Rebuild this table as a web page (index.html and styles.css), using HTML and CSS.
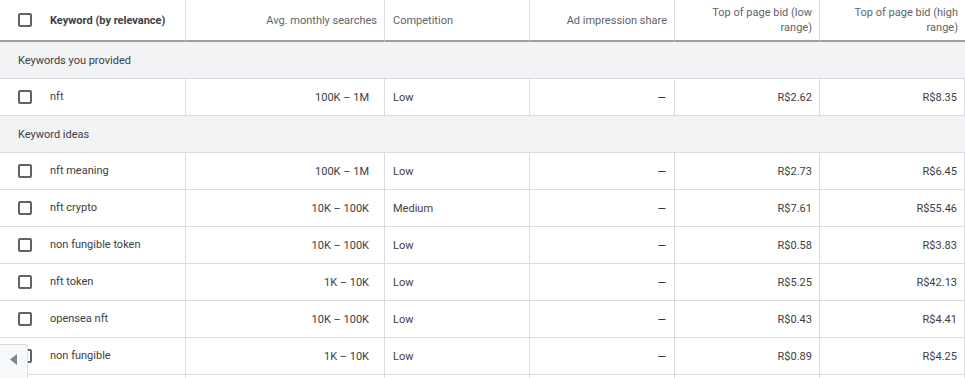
FILE: index.html
```html
<!DOCTYPE html>
<html lang="en">
<head>
    <meta charset="UTF-8">
    <meta name="viewport" content="width=device-width, initial-scale=1.0">
    <title>Keyword ideas</title>
    <link rel="stylesheet" href="styles.css">
</head>
<body>
    <div class="wrap">
        <table class="kw-table">
            <colgroup>
                <col class="c-kw">
                <col class="c-avg">
                <col class="c-comp">
                <col class="c-share">
                <col class="c-low">
                <col class="c-high">
            </colgroup>
            <thead>
                <tr>
                    <th class="kw-head"><span class="check"></span><span class="kw-title">Keyword (by relevance)</span></th>
                    <th class="num">Avg. monthly searches</th>
                    <th>Competition</th>
                    <th class="num">Ad impression share</th>
                    <th class="num">Top of page bid (low range)</th>
                    <th class="num">Top of page bid (high range)</th>
                </tr>
            </thead>
            <tbody>
                <tr class="group"><td colspan="6">Keywords you provided</td></tr>
                <tr>
                    <td class="kw"><span class="check"></span>nft</td>
                    <td class="num avg">100K – 1M</td>
                    <td>Low</td>
                    <td class="num dash">—</td>
                    <td class="num">R$2.62</td>
                    <td class="num">R$8.35</td>
                </tr>
                <tr class="group"><td colspan="6">Keyword ideas</td></tr>
                <tr>
                    <td class="kw"><span class="check"></span>nft meaning</td>
                    <td class="num avg">100K – 1M</td>
                    <td>Low</td>
                    <td class="num dash">—</td>
                    <td class="num">R$2.73</td>
                    <td class="num">R$6.45</td>
                </tr>
                <tr>
                    <td class="kw"><span class="check"></span>nft crypto</td>
                    <td class="num avg">10K – 100K</td>
                    <td>Medium</td>
                    <td class="num dash">—</td>
                    <td class="num">R$7.61</td>
                    <td class="num">R$55.46</td>
                </tr>
                <tr>
                    <td class="kw"><span class="check"></span>non fungible token</td>
                    <td class="num avg">10K – 100K</td>
                    <td>Low</td>
                    <td class="num dash">—</td>
                    <td class="num">R$0.58</td>
                    <td class="num">R$3.83</td>
                </tr>
                <tr>
                    <td class="kw"><span class="check"></span>nft token</td>
                    <td class="num avg">1K – 10K</td>
                    <td>Low</td>
                    <td class="num dash">—</td>
                    <td class="num">R$5.25</td>
                    <td class="num">R$42.13</td>
                </tr>
                <tr>
                    <td class="kw"><span class="check"></span>opensea nft</td>
                    <td class="num avg">10K – 100K</td>
                    <td>Low</td>
                    <td class="num dash">—</td>
                    <td class="num">R$0.43</td>
                    <td class="num">R$4.41</td>
                </tr>
                <tr>
                    <td class="kw"><span class="check"></span>non fungible</td>
                    <td class="num avg">1K – 10K</td>
                    <td>Low</td>
                    <td class="num dash">—</td>
                    <td class="num">R$0.89</td>
                    <td class="num">R$4.25</td>
                </tr>
                <!-- next row only peeks in below the fold -->
                <tr class="peek">
                    <td></td><td></td><td></td><td></td><td></td><td></td>
                </tr>
            </tbody>
        </table>

        <button class="scroll-left" aria-label="Scroll left">
            <svg width="7" height="11" viewBox="0 0 7 11"><path d="M7 0 L7 11 L0 5.5 Z" fill="#80868b"/></svg>
        </button>
    </div>
</body>
</html>
```

FILE: styles.css
```css
* { margin: 0; padding: 0; box-sizing: border-box; }
html, body { height: 100%; overflow: hidden; }
body { font-family: Roboto, "Liberation Sans", Arial, sans-serif; font-size: 11px; color: #3c4043; background: #fff; }
.wrap { position: relative; height: 378px; overflow: hidden; }

.kw-table { width: 965px; table-layout: fixed; border-collapse: separate; border-spacing: 0; }
.c-kw { width: 186px; }
.c-avg { width: 199px; }
.c-comp, .c-share, .c-low, .c-high { width: 145px; }

.kw-table th { height: 42px; padding: 0 7px 0 8px; font-weight: 400; color: #5f6368; text-align: left; line-height: 15px; border-right: 1px solid #dadce0; border-bottom: 2px solid #9aa0a6; vertical-align: middle; }
.kw-table th:last-child { border-right: none; }
.kw-table th.num { text-align: right; }
.kw-table th.kw-head { padding-left: 18px; }
.kw-title { font-weight: 700; color: #3c4043; }

.kw-table td { height: 37px; padding: 0 7px 0 8px; border-right: 1px solid #dadce0; border-bottom: 1px solid #dadce0; white-space: nowrap; vertical-align: middle; }
.kw-table td.num { text-align: right; }
.kw-table td.avg { padding-right: 15px; }
.kw-table td.dash { padding-right: 8px; color: #202124; }
.kw-table td.kw { padding-left: 18px; }

.group td { background: #f1f3f4; padding-left: 18px; border-right: none; }

.check { display: inline-block; width: 14px; height: 14px; border: 2px solid #5f6368; border-radius: 2px; vertical-align: middle; margin: -2px 18px 0 0; }

.scroll-left { position: absolute; left: -1px; top: 344px; width: 29px; height: 40px; background: #f8f9fa; border: 1px solid #dadce0; border-radius: 0 2px 0 0; display: flex; align-items: flex-start; justify-content: center; padding-top: 9px; cursor: pointer; }
```
